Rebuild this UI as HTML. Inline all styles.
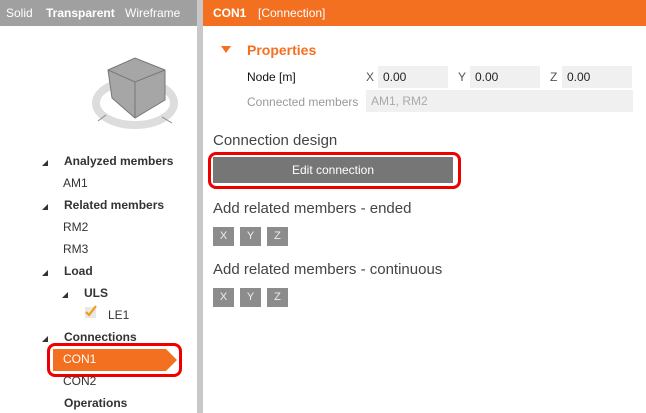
<!DOCTYPE html>
<html><head><style>
*{margin:0;padding:0;box-sizing:border-box}
body{width:646px;height:413px;overflow:hidden;background:#fff;font-family:"Liberation Sans",sans-serif;font-size:12px;color:#333;position:relative}
.abs{position:absolute;white-space:nowrap}
.topl{position:absolute;left:0;top:0;width:197px;height:26px;background:#a0a0a0;color:#fff;font-size:12px}
.div{position:absolute;left:197px;top:0;width:6px;height:413px;background:#c8c8c8}
.hdr{position:absolute;left:203px;top:0;width:443px;height:26px;background:#f37021;color:#fff}
.b{font-weight:bold}
.tri{position:absolute;width:0;height:0;border-left:6px solid transparent;border-bottom:6px solid #333}
.inp{position:absolute;background:#f0f0f0;height:22px;color:#222;padding:4px 5px;font-size:12px}
.sb{position:absolute;width:21px;height:19px;background:#8c8c8c;color:#eee;font-size:11px;text-align:center;line-height:19px}
.h2{font-size:15px;color:#444}
</style></head><body>
<div class="topl"><span class="abs" style="left:6px;top:6px">Solid</span><span class="abs b" style="left:46px;top:6px">Transparent</span><span class="abs" style="left:125px;top:6px">Wireframe</span></div>
<div class="div"></div>
<svg class="abs" style="left:90px;top:55px" width="100" height="80">
<ellipse cx="45" cy="48" rx="39" ry="22" fill="none" stroke="#ddd" stroke-width="8"/>
<polygon points="18,15 45,3 75,15 75,45 45,63 22,43" fill="#a6a6a6" stroke="#777" stroke-width="1"/>
<polyline points="18,15 45,27 75,15" fill="none" stroke="#777"/>
<line x1="45" y1="27" x2="45" y2="63" stroke="#777"/>
<line x1="8" y1="66" x2="16" y2="60" stroke="#888"/><line x1="72" y1="62" x2="82" y2="68" stroke="#888"/>
</svg>
<div class="tri" style="left:42px;top:160px"></div><span class="abs b" style="left:64px;top:154px">Analyzed members</span>
<span class="abs" style="left:63px;top:176px">AM1</span>
<div class="tri" style="left:42px;top:204px"></div><span class="abs b" style="left:64px;top:198px">Related members</span>
<span class="abs" style="left:63px;top:220px">RM2</span>
<span class="abs" style="left:63px;top:242px">RM3</span>
<div class="tri" style="left:42px;top:270px"></div><span class="abs b" style="left:64px;top:264px">Load</span>
<div class="tri" style="left:62px;top:292px"></div><span class="abs b" style="left:84px;top:286px">ULS</span>
<div class="abs" style="left:85px;top:307px;width:11px;height:11px;background:#e8e8e8"></div>
<svg class="abs" style="left:84px;top:304px" width="14" height="14"><polyline points="2,8 5,11 12,2" fill="none" stroke="#f39c12" stroke-width="2.2"/></svg>
<span class="abs" style="left:108px;top:308px">LE1</span>
<div class="tri" style="left:42px;top:336px"></div><span class="abs b" style="left:64px;top:330px">Connections</span>
<div class="abs" style="left:53px;top:349px;width:113px;height:22px;background:#f37021"></div>
<div class="abs" style="left:166px;top:349px;width:0;height:0;border-top:11px solid transparent;border-bottom:11px solid transparent;border-left:11px solid #f37021"></div>
<div class="abs" style="left:47px;top:343px;width:135px;height:34px;border:3px solid #e00;border-radius:8px"></div>
<span class="abs" style="left:63px;top:352px;color:#fff">CON1</span>
<span class="abs" style="left:63px;top:374px">CON2</span>
<span class="abs b" style="left:64px;top:396px">Operations</span>
<div class="hdr"><span class="abs b" style="left:10px;top:6px">CON1</span><span class="abs" style="left:55px;top:6px">[Connection]</span></div>
<div class="abs" style="left:221px;top:46px;width:0;height:0;border-left:5px solid transparent;border-right:5px solid transparent;border-top:7px solid #f37021"></div>
<span class="abs b" style="left:247px;top:42px;font-size:14px;color:#f37021">Properties</span>
<span class="abs" style="left:247px;top:70px;color:#111">Node [m]</span>
<span class="abs" style="left:366px;top:70px;color:#555">X</span><div class="inp" style="left:378px;top:66px;width:70px">0.00</div>
<span class="abs" style="left:458px;top:70px;color:#555">Y</span><div class="inp" style="left:470px;top:66px;width:70px">0.00</div>
<span class="abs" style="left:550px;top:70px;color:#555">Z</span><div class="inp" style="left:562px;top:66px;width:70px">0.00</div>
<span class="abs" style="left:247px;top:95px;color:#999">Connected members</span>
<div class="inp" style="left:366px;top:90px;width:267px;color:#aaa">AM1, RM2</div>
<span class="abs h2" style="left:213px;top:132px">Connection design</span>
<div class="abs" style="left:213px;top:157px;width:240px;height:26px;background:#767676;color:#fff;text-align:center;line-height:26px;font-size:12px">Edit connection</div>
<div class="abs" style="left:208px;top:152px;width:253px;height:37px;border:3px solid #e00;border-radius:8px"></div>
<span class="abs h2" style="left:213px;top:200px">Add related members - ended</span>
<div class="sb" style="left:213px;top:227px">X</div><div class="sb" style="left:240px;top:227px">Y</div><div class="sb" style="left:267px;top:227px">Z</div>
<span class="abs h2" style="left:213px;top:261px">Add related members - continuous</span>
<div class="sb" style="left:213px;top:288px">X</div><div class="sb" style="left:240px;top:288px">Y</div><div class="sb" style="left:267px;top:288px">Z</div>
</body></html>
